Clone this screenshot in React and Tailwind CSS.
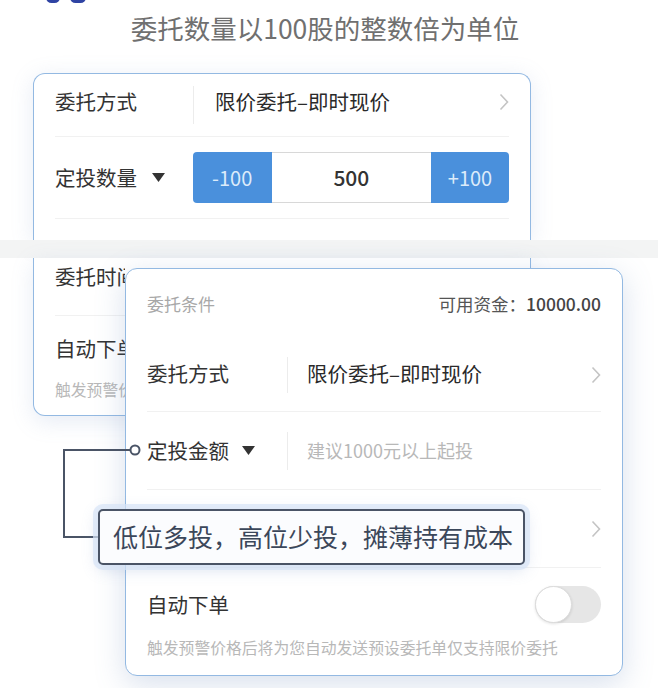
const FONT = { fontFamily: '"Noto Sans CJK SC", "Noto Sans", sans-serif' };

function Chevron() {
  return (
    <svg width="10" height="18" viewBox="0 0 10 18" className="shrink-0">
      <polyline points="1.5,1.5 8.5,9 1.5,16.5" fill="none" stroke="#c4c4c4" strokeWidth="1.6" />
    </svg>
  );
}

function Caret() {
  return (
    <svg width="13" height="9" viewBox="0 0 13 9" className="shrink-0">
      <polygon points="0,0 13,0 6.5,9" fill="#333" />
    </svg>
  );
}

function Card1() {
  return (
    <div className="ml-[33px] mt-[17px] w-[498px]">
      {/* top half, cut off by the band */}
      <div className="h-[167px] rounded-t-[12px] border-[1.5px] border-b-0 border-[#93b9e2] bg-white shadow-[0_4px_22px_rgba(120,150,200,0.18)]">
        <div className="flex h-[62px] items-center px-[21px]">
          <div className="w-[138px] pb-[8px] text-[20.5px] text-[#333]">委托方式</div>
          <div className="h-[38px] w-px bg-[#ececec]" />
          <div className="ml-[21px] flex-1 whitespace-nowrap pb-[8px] text-[20.5px] text-[#2a2a2a]">限价委托–即时现价</div>
          <div className="pb-[6px]">
            <Chevron />
          </div>
        </div>
        <div className="mx-[21px] h-px bg-[#f1f1f1]" />
        <div className="flex h-[81px] items-center px-[21px]">
          <div className="flex w-[138px] items-center gap-[15px] text-[20.5px] text-[#333]">
            定投数量
            <Caret />
          </div>
          <div className="flex h-[51px] w-[317px] overflow-hidden rounded-[4px]">
            <div className="flex w-[79px] items-center justify-center bg-[#4a90dc] text-[20px] text-[#dcebfa]">-100</div>
            <div className="flex flex-1 items-center justify-center border-y border-[#d8d8d8] bg-white text-[21px] font-medium text-[#333]">500</div>
            <div className="flex w-[78px] items-center justify-center bg-[#4a90dc] text-[20px] text-[#dcebfa]">+100</div>
          </div>
        </div>
        <div className="mx-[21px] h-px bg-[#f1f1f1]" />
      </div>

      <div className="-ml-[33px] h-[18px] w-[658px] bg-[#f3f4f4]" />

      {/* bottom half, mostly hidden behind the second card */}
      <div className="h-[158px] rounded-b-[12px] border-[1.5px] border-t-0 border-[#93b9e2] bg-white shadow-[0_6px_22px_rgba(120,150,200,0.18)]">
        <div className="h-[57px] pl-[21px] pt-[4px]">
          <div className="w-[70px] overflow-hidden whitespace-nowrap text-[20.5px] leading-[28px] text-[#333]">委托时间</div>
        </div>
        <div className="mx-[21px] h-px bg-[#f1f1f1]" />
        <div className="pl-[21px] pt-[18px]">
          <div className="w-[70px] overflow-hidden whitespace-nowrap text-[20.5px] leading-[28px] text-[#333]">自动下单</div>
        </div>
        <div className="mt-[17px] pl-[21px]">
          <div className="w-[70px] overflow-hidden whitespace-nowrap text-[15.8px] leading-[22px] text-[#b8b8b8]">
            触发预警价格后将为您自动发送预设委托单仅支持限价委托
          </div>
        </div>
      </div>
    </div>
  );
}

function Card2() {
  return (
    <div className="absolute left-[125px] top-[268px] h-[408px] w-[498px] rounded-[12px] border-[1.5px] border-[#93b9e2] bg-white shadow-[0_8px_30px_rgba(100,130,185,0.25)]">
      <div className="flex h-[70px] items-center justify-between px-[21px]">
        <span className="text-[17px] text-[#a8a8a8]">委托条件</span>
        <span className="text-[17.5px] text-[#555]">
          可用资金：<span className="font-medium text-[#444]">10000.00</span>
        </span>
      </div>
      <div className="flex h-[72px] items-center px-[21px]">
        <div className="w-[140px] pb-[4px] text-[20.5px] text-[#333]">委托方式</div>
        <div className="h-[36px] w-px bg-[#ececec]" />
        <div className="ml-[19px] flex-1 whitespace-nowrap pb-[4px] text-[20.5px] text-[#2a2a2a]">限价委托–即时现价</div>
        <Chevron />
      </div>
      <div className="mx-[21px] h-px bg-[#f1f1f1]" />
      <div className="flex h-[77px] items-center px-[21px]">
        <div className="flex w-[140px] items-center gap-[13px] text-[20.5px] text-[#333]">
          定投金额
          <Caret />
        </div>
        <div className="h-[38px] w-px bg-[#ececec]" />
        <div className="ml-[19px] flex-1 text-[18px] text-[#b8b8b8]">建议1000元以上起投</div>
      </div>
      <div className="mx-[21px] h-px bg-[#f1f1f1]" />
      <div className="flex h-[77px] items-center justify-end px-[21px]">
        <Chevron />
      </div>
      <div className="mx-[21px] h-px bg-[#f1f1f1]" />
      <div className="flex items-center justify-between px-[21px] pt-[18px]">
        <span className="text-[20.5px] text-[#333]">自动下单</span>
        <div className="flex h-[37px] w-[66px] items-center rounded-full bg-[#e6e6e6]">
          <div className="h-[37px] w-[37px] rounded-full border border-[#dcdcdc] bg-white shadow-[0_1px_3px_rgba(0,0,0,0.12)]" />
        </div>
      </div>
      <div className="mt-[14px] whitespace-nowrap px-[21px] text-[15.8px] leading-[22px] text-[#b8b8b8]">
        触发预警价格后将为您自动发送预设委托单仅支持限价委托
      </div>
    </div>
  );
}

export default function App() {
  return (
    <div className="relative h-[688px] w-[658px] overflow-hidden bg-white" style={FONT}>
      {/* partial logo cut off at the top */}
      <div className="absolute left-[46px] top-[-8px] flex gap-[10px]">
        <div className="h-[11px] w-[14px] rounded-full bg-[#2f43a3]" />
        <div className="h-[11px] w-[16px] rounded-full bg-[#2f43a3]" />
      </div>

      <div className="flex h-[55px] items-center justify-center whitespace-nowrap pr-[8px] text-[26.5px] text-[#707070]">
        委托数量以100股的整数倍为单位
      </div>

      <div className="pt-px">
        <Card1 />
      </div>
      <Card2 />

      <svg className="pointer-events-none absolute left-0 top-0" width="658" height="688">
        <path d="M131 450 H64 V537 H99" fill="none" stroke="#4a5466" strokeWidth="2" />
        <circle cx="135" cy="450" r="4.5" fill="#fff" stroke="#4a5466" strokeWidth="2" />
      </svg>

      <div className="absolute left-[98px] top-[509px] flex h-[56px] w-[427px] items-center whitespace-nowrap rounded-[5px] border-2 border-[#4a5466] bg-[#fbfcfe] pl-[13px] text-[25px] text-[#3b475a] shadow-[0_0_0_5px_rgba(215,228,246,0.7),0_4px_16px_rgba(120,150,200,0.3)]">
        低位多投，高位少投，摊薄持有成本
      </div>
    </div>
  );
}
